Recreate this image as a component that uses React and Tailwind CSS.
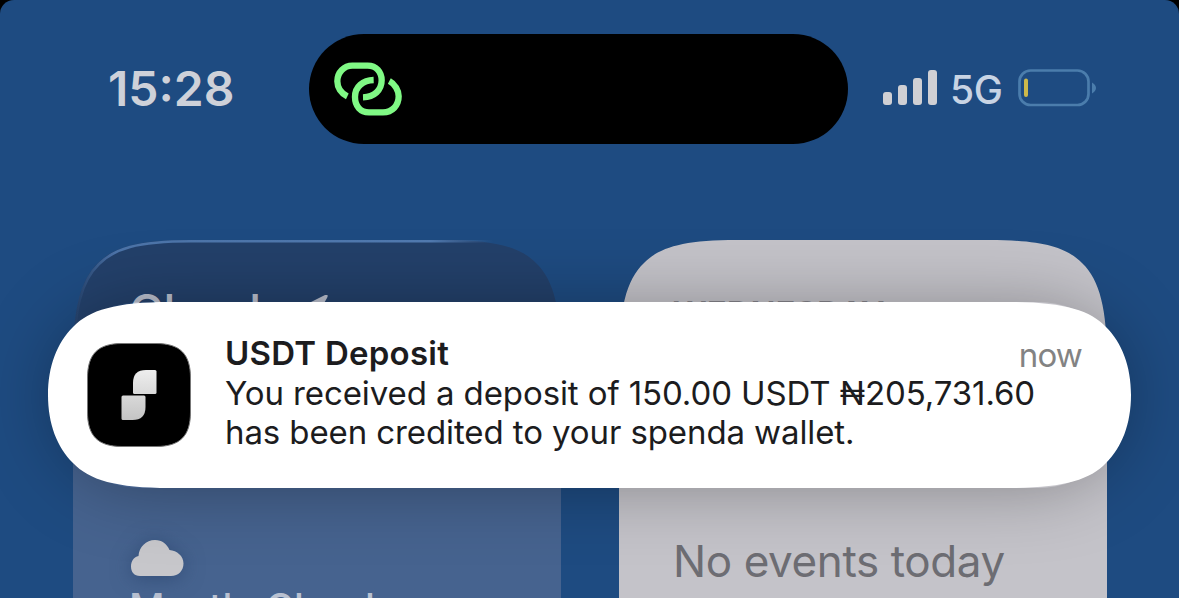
import React from "react";

const signalBars = ["h-[13px]", "h-[20px]", "h-[27px]", "h-[35px]"];

const LinkIcon = () => (
    <svg className="w-[70px] h-[57px]" viewBox="100 107 210 171" fill="none" stroke="#80f985" strokeWidth="19">
        <path d="M143 213C124 204 113 186 113 168C113 140 134 121 158 121H204C230 121 246 140 246 165C246 194 224 215 190 216" />
        <path d="M222 164C190 165 166 184 166 215C166 242 182 261 208 261H250C278 261 297 240 297 213C297 195 286 176 269 167" />
    </svg>
);

const BatteryIcon = () => (
    <svg className="w-[80px] h-[38px]" viewBox="0 0 80 38" fill="none">
        <rect x="1.5" y="1.5" width="69" height="34.5" rx="11" stroke="#4b7dac" strokeWidth="2.7" />
        <rect x="6" y="9.5" width="4" height="18.5" rx="2" fill="#cdb94b" />
        <path d="M74 13.5C76.500 15 78 17 78 19S76.500 23 74 24.500Z" fill="#4b7dac" />
    </svg>
);

const StatusBar = () => (
    <div className="flex h-[240px] items-start">
        <div className="w-[309px] pt-[60px] pl-[108px] text-[48px] leading-[58px] font-semibold text-[#ced1d9] whitespace-nowrap">
            15:28
        </div>
        <div className="mt-[34px] flex h-[110px] w-[539px] items-center rounded-full bg-black pl-[24px]">
            <LinkIcon />
        </div>
        <div className="mt-[69px] ml-[35px] flex h-[38px] items-start">
            <div className="mt-[1px] flex items-end gap-[6px]">
                {signalBars.map((height) => (
                    <div key={height} className={`w-[9px] rounded-[3px] bg-[#d0d0d4] ${height}`} />
                ))}
            </div>
            <div className="ml-[13px] w-[68px] text-[39px] leading-[42px] font-medium tracking-[-0.4px] text-[#c8d4e4] whitespace-nowrap">5G</div>
            <BatteryIcon />
        </div>
    </div>
);

const WeatherWidget = () => (
    <div className="relative h-[358px] w-[488px]">
        <div className="h-full bg-linear-to-b from-[#23406a] from-20% to-[#46638f] to-65% px-[56px] [clip-path:path('M0_120C0_70_7_40_25_23C40_8_62_0_118_0H370C426_0_448_8_463_23C481_40_488_70_488_120V358H0Z')]">
            <div className="flex h-[300px] items-start gap-[11px] pt-[43px] text-[47px] leading-[56px] font-medium text-[#babfcd]">
                <span>Cloudy</span>
                <svg className="mt-[12px] w-[30px] h-[26px]" viewBox="0 0 30 26" fill="#babfcd">
                    <path d="M2 12L26 0Q30 -1 28 3L16 24L14 13Z" />
                </svg>
            </div>
            <svg className="ml-[1px] h-[36px] w-[54px] drop-shadow-[0_2px_10px_rgba(30,55,95,0.5)]" viewBox="0 0 54 36" fill="#c7c7cb">
                <path d="M10 36C4 36 1 32 1 26.500C1 21 4 17 8.500 16C9 7 16 0 25 0C32 0 37 4 39.500 10C47 10.500 53.500 16 53.500 23.500C53.500 30.500 48.500 36 41 36Z" />
            </svg>
            <div className="mt-[9px] text-[39px] leading-[46px] font-medium text-[#b9c1d1] whitespace-nowrap">Mostly Cloudy</div>
        </div>
        {/* light catching the upper rim of the glass */}
        <svg className="absolute top-0 left-0 h-[120px] w-[488px]" viewBox="0 0 488 120" fill="none">
            <defs>
                <linearGradient id="rim" x1="0" x2="420" y1="0" y2="0" gradientUnits="userSpaceOnUse">
                    <stop offset="0" stopColor="#5680b8" stopOpacity="0" />
                    <stop offset="0.1" stopColor="#5680b8" stopOpacity="0.8" />
                    <stop offset="0.85" stopColor="#5680b8" stopOpacity="0.9" />
                    <stop offset="1" stopColor="#5680b8" stopOpacity="0" />
                </linearGradient>
            </defs>
            <path d="M1 120C1 70 8 41 26 24C41 9 63 1.300 118 1.300H420" stroke="url(#rim)" strokeWidth="2.500" />
        </svg>
    </div>
);

const CalendarWidget = () => (
    <div className="h-[358px] w-[488px] bg-[#c4c3c9] pl-[54px] [clip-path:path('M0_120C0_70_7_40_25_23C40_8_62_0_118_0H370C426_0_448_8_463_23C481_40_488_70_488_120V358H0Z')]">
        <div className="h-[293px] pt-[53px] text-[33px] leading-[40px] font-semibold text-[#85848a] whitespace-nowrap">WEDNESDAY</div>
        <div className="text-[44px] leading-[56px] tracking-[-0.4px] text-[#6d6d73] whitespace-nowrap">No events today</div>
    </div>
);

const AppIcon = () => (
    <svg className="mt-[40px] h-[106px] w-[106px] shrink-0" viewBox="0 0 106 106">
        <defs>
            <linearGradient id="mark" x1="0" x2="0" y1="28" y2="78" gradientUnits="userSpaceOnUse">
                <stop offset="0" stopColor="#eeeeee" />
                <stop offset="1" stopColor="#c4c4c4" />
            </linearGradient>
        </defs>
        <path
            d="M1.500 36C1.500 12 12 1.500 36 1.500H70C94 1.500 104.500 12 104.500 36V70C104.500 94 94 104.500 70 104.500H36C12 104.500 1.500 94 1.500 70Z"
            fill="#000"
            stroke="#777"
            strokeWidth="1"
        />
        <path d="M60 28H69Q70.500 28 70.500 29.500V50.500Q70.500 52 69 52H48.500Q47 52 47 50.500V41Q47 28 60 28Z" fill="url(#mark)" />
        <path d="M37 53.500H58Q59.500 53.500 59.500 55V65Q59.500 78 46.500 78H37Q35.500 78 35.500 76.500V55Q35.500 53.500 37 53.500Z" fill="url(#mark)" />
    </svg>
);

const Notification = () => (
    <div className="absolute top-[302px] left-[48px] h-[186px] w-[1083px] rounded-[93px] shadow-[0_2px_76px_-8px_rgba(0,0,0,0.36)]">
        <div className="flex h-full bg-white pl-[38px] [clip-path:path('M0_93C0_64_9_41_25_25C41_8_68_0_122_0H961C1015_0_1042_8_1058_25C1074_41_1083_64_1083_93C1083_122_1074_145_1058_161C1042_178_1015_186_961_186H122C68_186_41_178_25_161C9_145_0_122_0_93Z')]">
            <AppIcon />
            <div className="ml-[33px] w-[857px] pt-[32px] text-[33px] leading-[39px] tracking-[-0.1px] text-[#1c1c1e] whitespace-nowrap">
                <div className="flex h-[40px] justify-between">
                    <span className="font-semibold tracking-[0.25px]">USDT Deposit</span>
                    <span className="pt-[2px] tracking-[-0.8px] text-[#838383]">now</span>
                </div>
                <div>You received a deposit of 150.00 USDT ₦205,731.60</div>
                <div>has been credited to your spenda wallet.</div>
            </div>
        </div>
    </div>
);

const App = () => {
    return (
        <div className="h-[598px] w-[1179px] overflow-hidden bg-black font-['Inter','Noto_Sans',sans-serif]">
            <div className="relative h-full overflow-hidden rounded-t-[14px] bg-[#1e4b81]">
                <StatusBar />
                <div className="flex gap-[58px] pl-[73px]">
                    <WeatherWidget />
                    <CalendarWidget />
                </div>
                <Notification />
            </div>
        </div>
    );
};

export default App;
